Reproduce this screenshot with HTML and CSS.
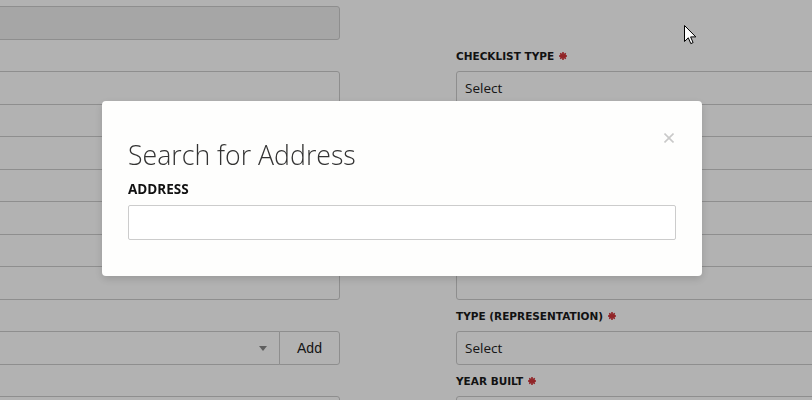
FILE: index.html
```html
<!DOCTYPE html>
<html lang="en">
<head>
<meta charset="utf-8">
<title>Search for Address</title>
<link rel="stylesheet" href="styles.css">
</head>
<body>
<div class="page">
  <div class="col">
    <div class="box disabled"></div>
    <div class="label-row"></div>
    <div class="stack">
      <div class="box h34"></div>
      <div class="box h33"></div>
      <div class="box h34"></div>
      <div class="box h33"></div>
      <div class="box h34"></div>
      <div class="box h33"></div>
      <div class="box h34"></div>
    </div>
    <div class="label-row"></div>
    <div class="input-group">
      <div class="box select-box"><span class="caret"></span></div>
      <button class="add-btn">Add</button>
    </div>
    <div class="label-row"></div>
    <div class="box"></div>
  </div>
  <div class="col">
    <div class="top-space"></div>
    <div class="label-row"><span class="lbl">CHECKLIST TYPE</span><svg class="req" viewBox="0 0 10 10"><g stroke="currentColor" stroke-width="2.2" stroke-linecap="round"><line x1="5" y1="1" x2="5" y2="9"/><line x1="1" y1="5" x2="9" y2="5"/><line x1="2.2" y1="2.2" x2="7.8" y2="7.8"/><line x1="7.8" y1="2.2" x2="2.2" y2="7.8"/></g></svg></div>
    <div class="stack">
      <div class="box h34 text">Select</div>
      <div class="box h33"></div>
      <div class="box h34"></div>
      <div class="box h33"></div>
      <div class="box h34"></div>
      <div class="box h33"></div>
      <div class="box h34"></div>
    </div>
    <div class="label-row"><span class="lbl">TYPE (REPRESENTATION)</span><svg class="req" viewBox="0 0 10 10"><g stroke="currentColor" stroke-width="2.2" stroke-linecap="round"><line x1="5" y1="1" x2="5" y2="9"/><line x1="1" y1="5" x2="9" y2="5"/><line x1="2.2" y1="2.2" x2="7.8" y2="7.8"/><line x1="7.8" y1="2.2" x2="2.2" y2="7.8"/></g></svg></div>
    <div class="box text">Select</div>
    <div class="label-row"><span class="lbl">YEAR BUILT</span><svg class="req" viewBox="0 0 10 10"><g stroke="currentColor" stroke-width="2.2" stroke-linecap="round"><line x1="5" y1="1" x2="5" y2="9"/><line x1="1" y1="5" x2="9" y2="5"/><line x1="2.2" y1="2.2" x2="7.8" y2="7.8"/><line x1="7.8" y1="2.2" x2="2.2" y2="7.8"/></g></svg></div>
    <div class="box"></div>
  </div>
</div>

<div class="backdrop">
  <div class="modal">
    <button class="close" aria-label="Close"><svg viewBox="0 0 10 10"><g stroke="#c9c9c9" stroke-width="1.6"><line x1="0.5" y1="0.5" x2="9.5" y2="9.5"/><line x1="9.5" y1="0.5" x2="0.5" y2="9.5"/></g></svg></button>
    <h2 class="modal-title">Search for Address</h2>
    <label class="modal-label">ADDRESS</label>
    <div class="modal-input"></div>
  </div>
</div>

<svg class="cursor" viewBox="0 0 13 20" width="13" height="20"><path d="M0.5 0.5 L0.5 16.5 L4.3 12.8 L6.8 18.6 L9.1 17.6 L6.6 11.9 L11.8 11.9 Z" fill="#fff" stroke="#000" stroke-width="1"/></svg>
</body>
</html>
```

FILE: styles.css
```css
html, body {
  margin: 0;
  padding: 0;
  height: 100%;
  overflow: hidden;
  background: #fff;
  font-family: "Open Sans", "Noto Sans", sans-serif;
}

.page {
  display: grid;
  grid-template-columns: 440px 440px;
  column-gap: 116px;
  margin-left: -100px;
  padding-top: 6px;
}

.col {
  display: flex;
  flex-direction: column;
}

.box {
  box-sizing: border-box;
  height: 34px;
  border: 1px solid #ccc;
  border-radius: 3px;
  background: #fff;
}

.box.disabled {
  background: #eee;
}

.box.text {
  display: flex;
  align-items: center;
  padding-left: 8px;
  padding-bottom: 1px;
  font-size: 13.5px;
  color: #222;
}

.top-space {
  height: 34px;
}

.label-row {
  height: 31px;
  display: flex;
  align-items: center;
  gap: 5px;
}

.lbl {
  font-family: "DejaVu Sans", sans-serif;
  font-weight: bold;
  font-size: 10.5px;
  color: #1a1a1a;
}

.req {
  width: 8px;
  height: 8px;
  color: #d0353a;
}

.stack {
  display: flex;
  flex-direction: column;
}

.stack .box {
  border-radius: 0;
}

.stack .box + .box {
  margin-top: -1px;
}

.stack .box:first-child {
  border-radius: 3px 3px 0 0;
}

.stack .box:last-child {
  border-radius: 0 0 3px 3px;
}

.h34 { height: 34px; }
.h33 { height: 33px; }

.input-group {
  display: flex;
  height: 34px;
}

.select-box {
  flex: 1;
  position: relative;
  border-radius: 3px 0 0 3px;
}

.caret {
  position: absolute;
  right: 12px;
  top: 14px;
  width: 0;
  height: 0;
  border-left: 4px solid transparent;
  border-right: 4px solid transparent;
  border-top: 5px solid #888;
}

.add-btn {
  box-sizing: border-box;
  width: 61px;
  height: 34px;
  margin-left: -1px;
  border: 1px solid #ccc;
  border-radius: 0 3px 3px 0;
  background: #fff;
  font-family: "Liberation Sans", Arial, sans-serif;
  font-size: 14px;
  color: #222;
  padding: 0;
}

.backdrop {
  position: fixed;
  inset: 0;
  background: rgba(0, 0, 0, 0.3);
}

.modal {
  position: relative;
  box-sizing: border-box;
  margin: 101px 0 0 102px;
  width: 600px;
  height: 175px;
  background: #fefefd;
  border-radius: 4px;
  padding: 35px 26px 0 26px;
  box-shadow: 0 3px 9px rgba(0, 0, 0, 0.15);
}

.close {
  position: absolute;
  top: 32px;
  right: 28px;
  width: 10px;
  height: 10px;
  padding: 0;
  border: 0;
  background: none;
}

.close svg {
  display: block;
  width: 10px;
  height: 10px;
}

.modal-title {
  margin: 0;
  font-family: "Open Sans", "Noto Sans", sans-serif;
  font-weight: 300;
  font-size: 26.7px;
  line-height: 38px;
  color: #333;
}

.modal-label {
  display: block;
  margin-top: 7px;
  font-family: "Open Sans", sans-serif;
  font-weight: 700;
  font-size: 13.5px;
  line-height: 16px;
  color: #111;
}

.modal-input {
  box-sizing: border-box;
  margin-top: 8px;
  height: 35px;
  border: 1px solid #ccc;
  border-radius: 2px;
  background: #fff;
}

.cursor {
  position: fixed;
  left: 684px;
  top: 25px;
}
```
